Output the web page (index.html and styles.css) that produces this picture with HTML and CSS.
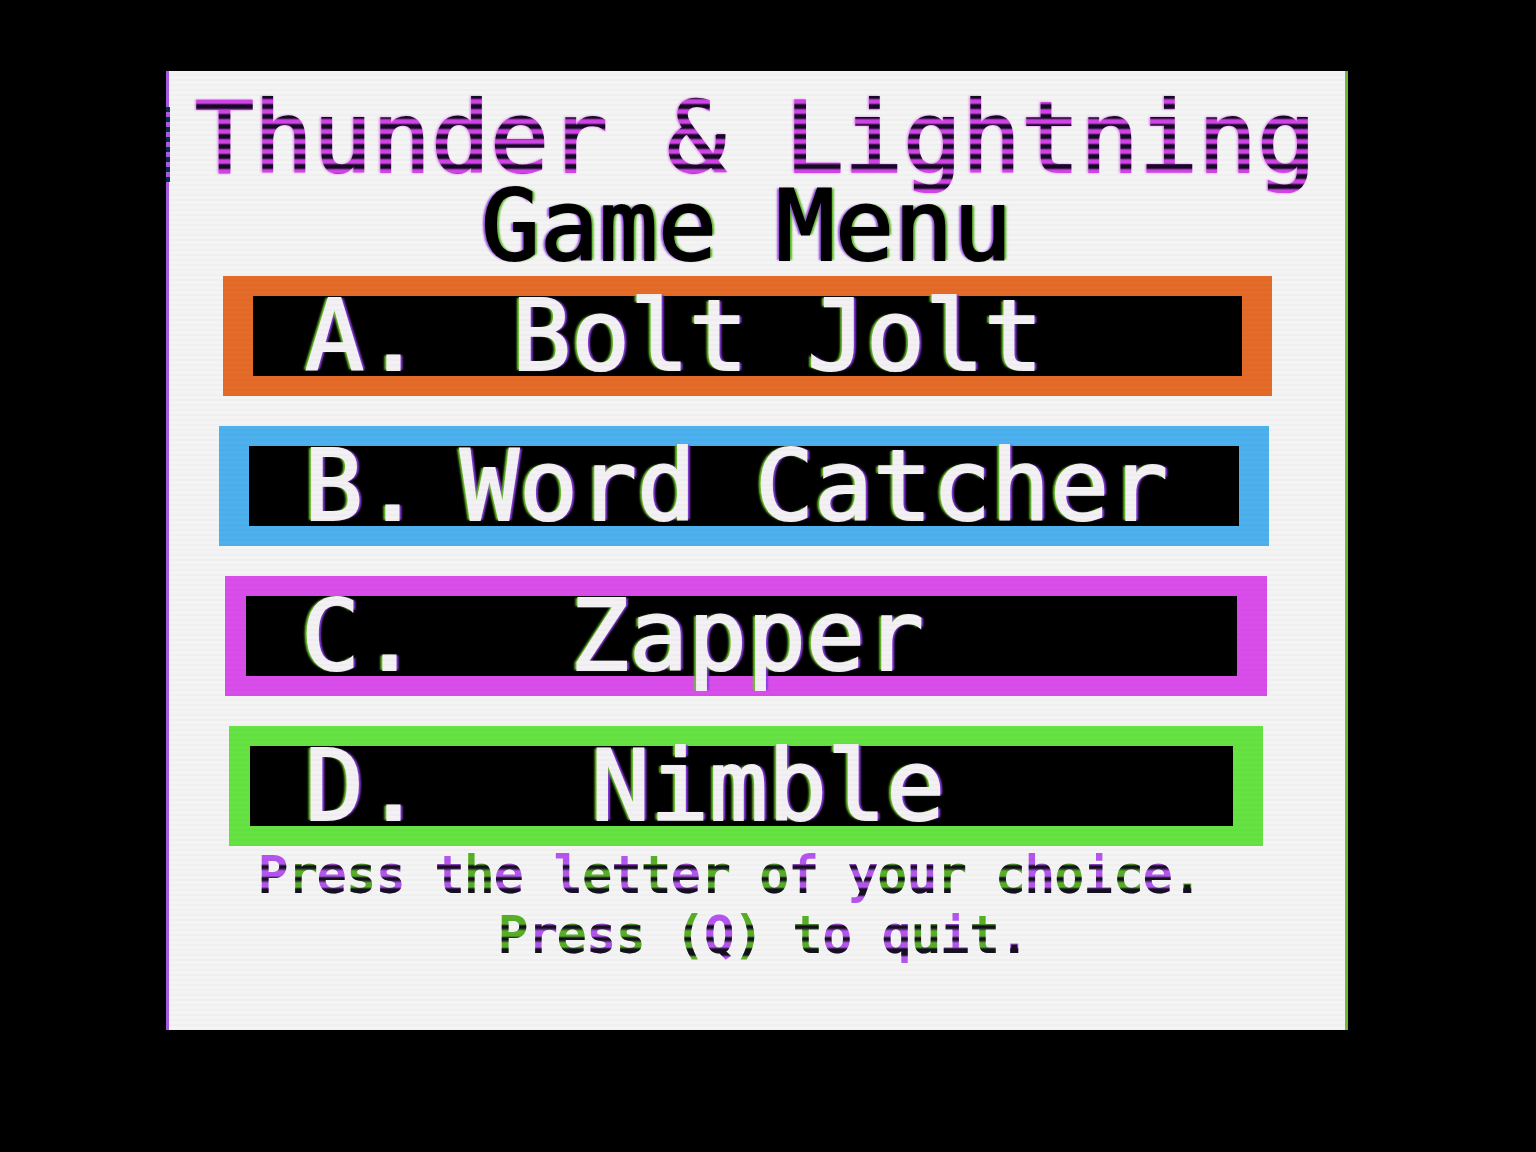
FILE: index.html
```html
<!DOCTYPE html>
<html lang="en">
<head>
    <meta charset="UTF-8">
    <title>Thunder &amp; Lightning</title>
    <meta name="viewport" content="width=device-width, initial-scale=1.0">
    <link rel="stylesheet" href="styles.css">
</head>
<body>
    <main class="screen">
        <header class="heading">
            <h1 class="title">Thunder &amp; Lightning</h1>
            <h2 class="subtitle">Game Menu</h2>
        </header>
        <nav class="menu">
            <button class="item bolt" type="button" accesskey="a"><span class="key">A.</span><span class="name">Bolt Jolt</span></button>
            <button class="item catcher" type="button" accesskey="b"><span class="key">B.</span><span class="name">Word Catcher</span></button>
            <button class="item zapper" type="button" accesskey="c"><span class="key">C.</span><span class="name">Zapper</span></button>
            <button class="item nimble" type="button" accesskey="d"><span class="key">D.</span><span class="name">Nimble</span></button>
        </nav>
        <footer class="help">
            <p class="choice"><span class="tint">Press the letter of your choice<span class="stop">.</span></span></p>
            <p class="quit"><span class="tint">Press (Q) to quit<span class="stop">.</span></span></p>
        </footer>
    </main>
</body>
</html>
```
FILE: styles.css
```css
* {
    box-sizing: border-box;
}
body {
    background: #000;
    margin: 0;
    padding: 71px 188px 121px 166px;
    font-family: "DejaVu Sans Mono", monospace;
}
.screen {
    position: relative;
    background: #f4f4f4;
    border-left: 3px solid #a55be0;
    border-right: 3px solid #6fb83a;
    padding: 24px 0 64px;
    white-space: nowrap;
}
/* scanlines over the whole screen */
.screen::after {
    content: "";
    position: absolute;
    inset: 0;
    background: repeating-linear-gradient(rgba(0, 0, 0, 0) 0 3px, rgba(0, 0, 0, 0.02) 3px 5px);
    pointer-events: none;
}
.title,
.subtitle {
    margin: 0;
    font-size: 98px;
    line-height: 86px;
    font-weight: normal;
}
.title {
    /* room for the descenders inside the clipped background */
    padding: 0 0 12px 26px;
    margin-bottom: -10px;
    color: transparent;
    -webkit-text-stroke: 2px transparent;
    background: repeating-linear-gradient(#140a24 0 3px, #d043e6 5px 8px, #140a24 10px);
    background-clip: text;
    -webkit-background-clip: text;
    filter: drop-shadow(-1px 0 1px #e07af0);
}
.subtitle {
    padding-left: 312px;
    color: #000;
    -webkit-text-stroke: 2px #000;
    text-shadow: -3px 0 2px #9a4fe0, 3px 0 2px #5cb82a;
}
/* interference dashes on the left edge beside the title */
.heading::before {
    content: "";
    position: absolute;
    left: -3px;
    top: 36px;
    width: 4px;
    height: 75px;
    background: repeating-linear-gradient(#0b2a44 0 5px, #a55be0 5px 10px);
}
.menu {
    display: flex;
    flex-direction: column;
    gap: 30px;
    margin-top: 7px;
}
.item {
    display: flex;
    border-style: solid;
    border-width: 20px 30px;
    background: #000;
    color: #f4f1f4;
    font: inherit;
    font-size: 98px;
    line-height: 80px;
    padding: 0;
    -webkit-text-stroke: 2px #f4f1f4;
    text-shadow: -3px 0 2px #6cc52c, 3px 0 2px #8a3de0;
    cursor: pointer;
}
.key {
    margin-left: 52px;
}
.bolt {
    margin: 0 73px 0 54px;
    border-color: #e56b29;
}
.catcher {
    margin: 0 76px 0 50px;
    border-color: #4cb1ee;
}
.zapper {
    margin: 0 78px 0 56px;
    border-width: 20px 30px 20px 21px;
    border-color: #d94dea;
}
.nimble {
    margin: 0 82px 0 60px;
    border-width: 20px 30px 20px 21px;
    border-color: #66e343;
}
.catcher .key,
.zapper .key,
.nimble .key {
    margin-left: 55px;
}
.bolt .name {
    margin-left: 89px;
}
.catcher .name {
    margin-left: 38px;
}
.zapper .name {
    margin-left: 151px;
}
.nimble .name {
    margin-left: 168px;
}
.help {
    font-size: 49px;
    line-height: 60px;
}
.help p {
    margin: 0;
}
.choice {
    padding-left: 89px;
    --odd: #b355ee;
    --even: #57ae27;
}
.quit {
    padding-left: 329px;
    --odd: #57ae27;
    --even: #b355ee;
}
/* letters alternate between two colours, with dark rows at the x-height, middle and baseline */
.tint {
    display: inline-block;
    color: transparent;
    -webkit-text-stroke: 2px transparent;
    background:
        linear-gradient(transparent 18px, #151020 20px 22px, transparent 25px 30px, #151020 32px 34px, transparent 37px 41px, #151020 43px 49px, transparent 51px),
        repeating-linear-gradient(to right, var(--odd) 0 1ch, var(--even) 1ch 2ch);
    background-clip: text;
    -webkit-background-clip: text;
}
.stop {
    color: #151020;
}
```
